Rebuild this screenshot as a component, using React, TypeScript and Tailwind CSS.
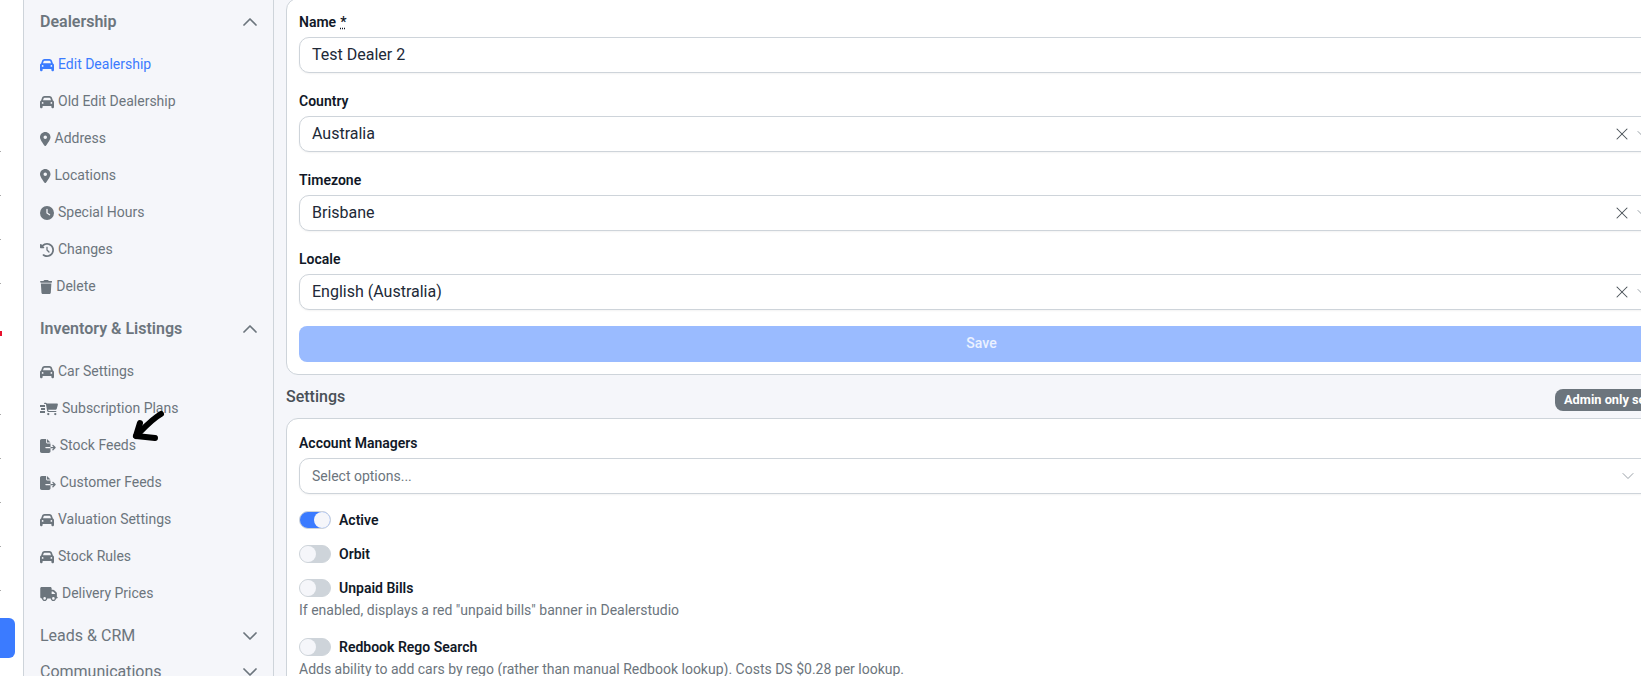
import { FaCar, FaCartShopping, FaClock, FaClockRotateLeft, FaFileExport, FaLocationDot, FaTrash, FaTruck } from 'react-icons/fa6';
import { ChevronDown, ChevronUp, X } from 'lucide-react';
import type { ReactNode } from 'react';

const FastCart = () => (
  <span className="flex items-center w-[18px] h-[14px]">
    <span className="flex flex-col items-end gap-[1px] w-[5px] shrink-0 -mr-[1px]">
      <span className="w-[5px] h-[2px] bg-current" />
      <span className="w-[4px] h-[2px] bg-current" />
      <span className="w-[5px] h-[2px] bg-current" />
    </span>
    <FaCartShopping className="w-[14px] h-[14px]" />
  </span>
);

const dealershipLinks = [
  { icon: <FaCar className="w-[14px] h-[14px]" />, label: 'Edit Dealership', active: true },
  { icon: <FaCar className="w-[14px] h-[14px]" />, label: 'Old Edit Dealership' },
  { icon: <FaLocationDot className="w-[10.5px] h-[14px]" />, label: 'Address' },
  { icon: <FaLocationDot className="w-[10.5px] h-[14px]" />, label: 'Locations' },
  { icon: <FaClock className="w-[14px] h-[14px]" />, label: 'Special Hours' },
  { icon: <FaClockRotateLeft className="w-[14px] h-[14px]" />, label: 'Changes' },
  { icon: <FaTrash className="w-[12.25px] h-[14px]" />, label: 'Delete' },
];

const inventoryLinks = [
  { icon: <FaCar className="w-[14px] h-[14px]" />, label: 'Car Settings' },
  { icon: <FastCart />, label: 'Subscription Plans' },
  { icon: <FaFileExport className="w-[15.75px] h-[14px]" />, label: 'Stock Feeds' },
  { icon: <FaFileExport className="w-[15.75px] h-[14px]" />, label: 'Customer Feeds' },
  { icon: <FaCar className="w-[14px] h-[14px]" />, label: 'Valuation Settings' },
  { icon: <FaCar className="w-[14px] h-[14px]" />, label: 'Stock Rules' },
  { icon: <FaTruck className="w-[18px] h-[14px]" />, label: 'Delivery Prices' },
];

const NavGroup = ({ title, open, links }: { title: string; open?: boolean; links?: { icon: ReactNode; label: string; active?: boolean }[] }) => (
  <div>
    <div className="h-[36px] flex items-center justify-between pr-[11px] text-[#6c757d]">
      <span className={`text-[16px] ${open ? 'font-semibold' : ''}`}>{title}</span>
      {open ? <ChevronUp size={24} strokeWidth={1.75} /> : <ChevronDown size={24} strokeWidth={1.75} />}
    </div>
    {links && (
      <ul className="pt-[6px] pb-[6px]">
        {links.map((link) => (
          <li key={link.label} className={`h-[37px] flex items-center gap-[4px] text-[14px] ${link.active ? 'text-[#3b7bff]' : 'text-[#6c757d]'}`}>
            {link.icon}
            {link.label}
          </li>
        ))}
      </ul>
    )}
  </div>
);

const Field = ({ label, value, clear, placeholder, required }: { label: string; value: string; clear?: boolean; placeholder?: boolean; required?: boolean }) => (
  <div>
    <label className="block h-[22px] mb-[4px] text-[14px] font-semibold leading-[22px] text-[#111827]">
      {label}
      {required && <span className="ml-1 underline decoration-dotted">*</span>}
    </label>
    <div className={`h-[36px] flex items-center justify-between pl-[12px] bg-white border border-[#ced4da] rounded-[10px] shadow-xs ${placeholder ? 'pr-[25px]' : 'pr-[10px]'}`}>
      <span className={placeholder ? 'text-[14px] text-[#6c757d]' : 'text-[16px] text-[#212937]'}>{value}</span>
      {(clear || placeholder) && (
        <span className="flex items-center gap-px">
          {clear && <X size={20} strokeWidth={1.25} className="text-[#495057]" />}
          <ChevronDown size={20} strokeWidth={1} className="text-[#868e96]" />
        </span>
      )}
    </div>
  </div>
);

const Toggle = ({ label, on, help }: { label: string; on?: boolean; help?: string }) => (
  <div className={help ? 'pb-[1px]' : ''}>
    <div className="h-[18px] flex items-center gap-[8px]">
      <span className={`w-[32px] h-[18px] rounded-full border flex ${on ? 'bg-[#3b7bff] border-[#ced4da] justify-end' : 'bg-[#ced4da] border-[#ced4da]'}`}>
        <span className="w-[16px] h-[16px] rounded-full bg-[#f5f6fa]" />
      </span>
      <span className="text-[14px] font-semibold text-[#111827]">{label}</span>
    </div>
    {help && <p className="mt-[3px] text-[14px] leading-[21px] text-[#6c757d]">{help}</p>}
  </div>
);

// scraps of the page underneath that peek out at the left edge
const LeftRail = () => (
  <div className="w-[23px] shrink-0 bg-white flex flex-col items-start pt-[151px]">
    <div className="flex flex-col gap-[43px]">
      <span className="block w-[1px] h-[1px] bg-[#aaaaaa]" />
      <span className="block w-[1px] h-[1px] bg-[#aaaaaa]" />
      <span className="block w-[1px] h-[1px] bg-[#aaaaaa]" />
      <span className="block w-[1px] h-[1px] bg-[#aaaaaa]" />
    </div>
    <span className="block mt-[47px] w-[2px] h-[5px] bg-[#e8112d]" />
    <div className="mt-[78px] flex flex-col gap-[43px]">
      <span className="block w-[1px] h-[1px] bg-[#aaaaaa]" />
      <span className="block w-[1px] h-[1px] bg-[#aaaaaa]" />
      <span className="block w-[1px] h-[1px] bg-[#aaaaaa]" />
      <span className="block w-[1px] h-[1px] bg-[#aaaaaa]" />
      <span className="block w-[1px] h-[1px] bg-[#aaaaaa]" />
    </div>
    <span className="block mt-[27px] w-[15px] h-[40px] rounded-r-[6px] bg-[#3b7bff]" />
  </div>
);

export default function App() {
  return (
    <div className="relative h-[676px] w-[1641px] overflow-hidden flex bg-white font-['Roboto',sans-serif]">
      <LeftRail />
      <aside className="w-[251px] shrink-0 pl-[16px] pt-[4px] bg-[#f5f6fa] border-x border-[#ced4da]">
        <NavGroup title="Dealership" open links={dealershipLinks} />
        <NavGroup title="Inventory & Listings" open links={inventoryLinks} />
        <NavGroup title="Leads & CRM" />
        <NavGroup title="Communications" />
      </aside>
      <main className="w-[1403px] shrink-0 pl-[12px] bg-[#f5f6fa] -mt-[2px]">
        <section className="p-[12px] bg-white border border-[#ced4da] rounded-[12px]">
          <div className="flex flex-col gap-[17px]">
            <Field label="Name" required value="Test Dealer 2" />
            <Field label="Country" value="Australia" clear />
            <Field label="Timezone" value="Brisbane" clear />
            <Field label="Locale" value="English (Australia)" clear />
          </div>
          <button className="block w-full h-[36px] pb-[1px] mt-[16px] rounded-[8px] bg-[#9abbff] text-[14px] font-medium text-white/80">Save</button>
        </section>
        <div className="h-[43px] flex items-center">
          <h2 className="w-[1269px] shrink-0 text-[16px] font-medium text-[#495057]">Settings</h2>
          <span className="mt-[6px] h-[22px] px-[9px] flex items-center rounded-[8px] bg-[#6c757d] text-[12.8px] font-bold text-white whitespace-nowrap">Admin only settings</span>
        </div>
        <section className="px-[12px] pt-[13px] pb-[40px] bg-white border border-[#ced4da] rounded-[12px]">
          <Field label="Account Managers" value="Select options..." placeholder />
          <div className="mt-[17px] flex flex-col gap-[16px]">
            <Toggle label="Active" on />
            <Toggle label="Orbit" />
            <Toggle label="Unpaid Bills" help={'If enabled, displays a red "unpaid bills" banner in Dealerstudio'} />
            <Toggle label="Redbook Rego Search" help="Adds ability to add cars by rego (rather than manual Redbook lookup). Costs DS $0.28 per lookup." />
          </div>
        </section>
      </main>
      {/* hand-drawn arrow scribbled on the screenshot */}
      <svg className="absolute left-[130px] top-[408px] w-[36px] h-[36px]" viewBox="0 0 36 36" fill="none" stroke="#000" strokeWidth="6" strokeLinecap="round" strokeLinejoin="round">
        <path d="M31 6 C22 11 14 20 6 28" />
        <path d="M10 15 L6 28 L25 30" />
      </svg>
    </div>
  );
}
